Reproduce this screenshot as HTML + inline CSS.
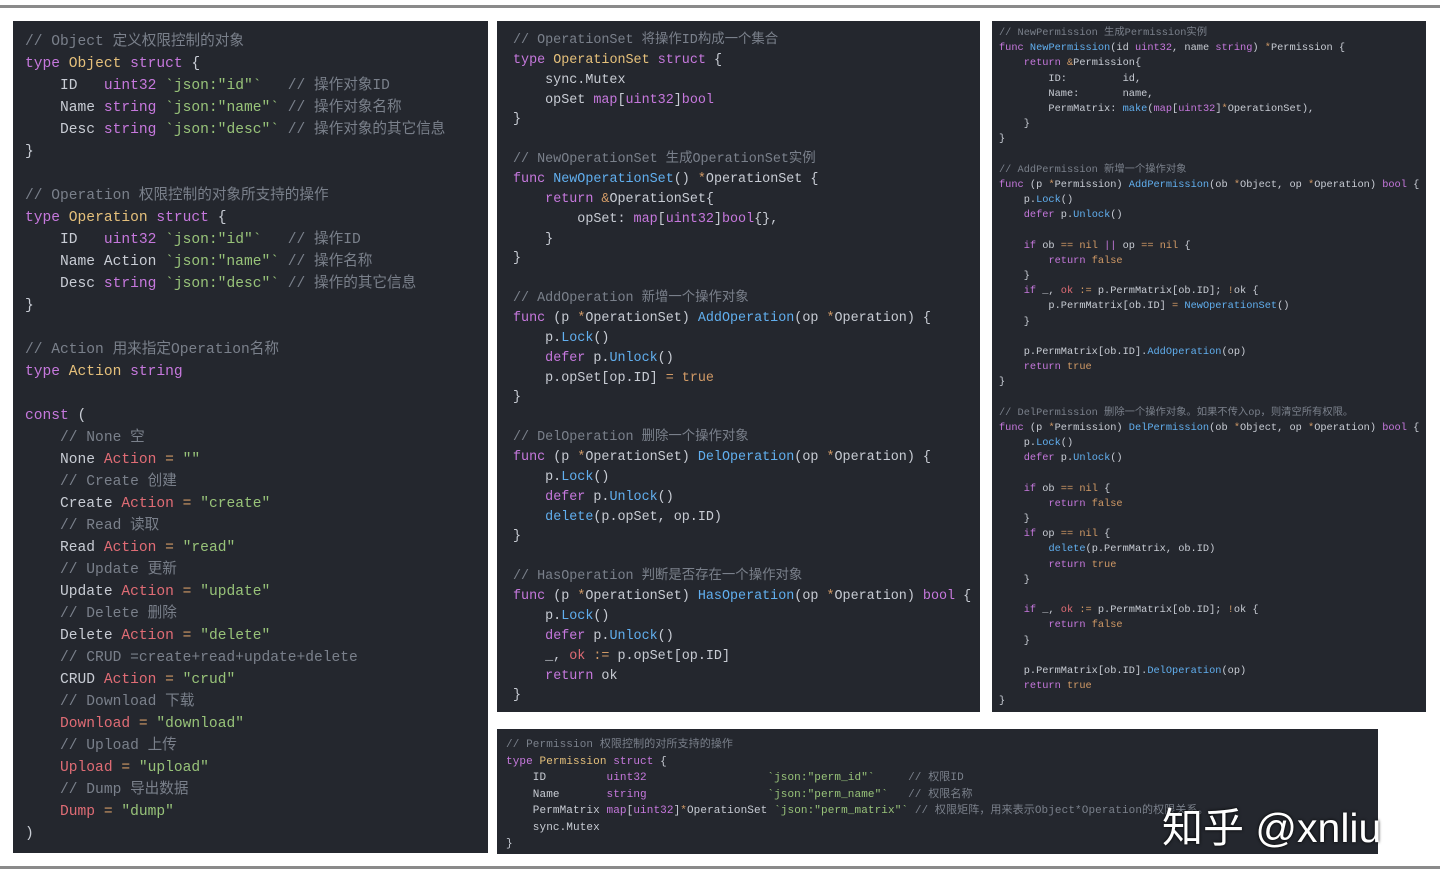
<!DOCTYPE html>
<html><head><meta charset="utf-8"><style>
html,body{margin:0;padding:0;background:#fff;width:1440px;height:879px;overflow:hidden;position:relative}
.hl{position:absolute;left:0;width:1440px;height:3px;background:#8a8a8a}
.p{position:absolute;background:#24272e;margin:0;color:#c8ccd4;font-family:"Liberation Mono","Noto Sans CJK SC",monospace;white-space:pre;overflow:hidden;box-sizing:border-box}
.c{color:#7a808b}.k{color:#c678dd}.t{color:#e5c07b}.s{color:#98c379}.f{color:#61afef}.r{color:#e06c75}.o{color:#d19a66}
.wm{position:absolute;left:1162px;top:794px;font-family:"Liberation Sans","Noto Sans CJK SC",sans-serif;font-size:41px;color:#fff;white-space:nowrap;text-shadow:0 0 3px #000}
</style></head><body>
<div class="hl" style="top:5px"></div>
<div class="hl" style="top:866px"></div>
<pre class="p" style="left:13px;top:21px;width:475px;height:832px;padding:10px 0 0 12px;font-size:14.6px;line-height:22px"><span class="c">// Object 定义权限控制的对象</span>
<span class="k">type</span> <span class="t">Object</span> <span class="k">struct</span> {
    ID   <span class="k">uint32</span> <span class="s">`json:"id"`</span>   <span class="c">// 操作对象ID</span>
    Name <span class="k">string</span> <span class="s">`json:"name"`</span> <span class="c">// 操作对象名称</span>
    Desc <span class="k">string</span> <span class="s">`json:"desc"`</span> <span class="c">// 操作对象的其它信息</span>
}

<span class="c">// Operation 权限控制的对象所支持的操作</span>
<span class="k">type</span> <span class="t">Operation</span> <span class="k">struct</span> {
    ID   <span class="k">uint32</span> <span class="s">`json:"id"`</span>   <span class="c">// 操作ID</span>
    Name Action <span class="s">`json:"name"`</span> <span class="c">// 操作名称</span>
    Desc <span class="k">string</span> <span class="s">`json:"desc"`</span> <span class="c">// 操作的其它信息</span>
}

<span class="c">// Action 用来指定Operation名称</span>
<span class="k">type</span> <span class="t">Action</span> <span class="k">string</span>

<span class="k">const</span> (
    <span class="c">// None 空</span>
    None <span class="r">Action</span> <span class="o">=</span> <span class="s">""</span>
    <span class="c">// Create 创建</span>
    Create <span class="r">Action</span> <span class="o">=</span> <span class="s">"create"</span>
    <span class="c">// Read 读取</span>
    Read <span class="r">Action</span> <span class="o">=</span> <span class="s">"read"</span>
    <span class="c">// Update 更新</span>
    Update <span class="r">Action</span> <span class="o">=</span> <span class="s">"update"</span>
    <span class="c">// Delete 删除</span>
    Delete <span class="r">Action</span> <span class="o">=</span> <span class="s">"delete"</span>
    <span class="c">// CRUD =create+read+update+delete</span>
    CRUD <span class="r">Action</span> <span class="o">=</span> <span class="s">"crud"</span>
    <span class="c">// Download 下载</span>
    <span class="r">Download</span> <span class="o">=</span> <span class="s">"download"</span>
    <span class="c">// Upload 上传</span>
    <span class="r">Upload</span> <span class="o">=</span> <span class="s">"upload"</span>
    <span class="c">// Dump 导出数据</span>
    <span class="r">Dump</span> <span class="o">=</span> <span class="s">"dump"</span>
)</pre>
<pre class="p" style="left:497px;top:21px;width:483px;height:691px;padding:10px 0 0 16px;font-size:13.4px;line-height:19.86px"><span class="c">// OperationSet 将操作ID构成一个集合</span>
<span class="k">type</span> <span class="t">OperationSet</span> <span class="k">struct</span> {
    sync.Mutex
    opSet <span class="k">map</span>[<span class="k">uint32</span>]<span class="k">bool</span>
}

<span class="c">// NewOperationSet 生成OperationSet实例</span>
<span class="k">func</span> <span class="f">NewOperationSet</span>() <span class="o">*</span>OperationSet {
    <span class="k">return</span> <span class="o">&amp;</span>OperationSet{
        opSet: <span class="k">map</span>[<span class="k">uint32</span>]<span class="k">bool</span>{},
    }
}

<span class="c">// AddOperation 新增一个操作对象</span>
<span class="k">func</span> (p <span class="o">*</span>OperationSet) <span class="f">AddOperation</span>(op <span class="o">*</span>Operation) {
    p.<span class="f">Lock</span>()
    <span class="k">defer</span> p.<span class="f">Unlock</span>()
    p.opSet[op.ID] <span class="o">=</span> <span class="o">true</span>
}

<span class="c">// DelOperation 删除一个操作对象</span>
<span class="k">func</span> (p <span class="o">*</span>OperationSet) <span class="f">DelOperation</span>(op <span class="o">*</span>Operation) {
    p.<span class="f">Lock</span>()
    <span class="k">defer</span> p.<span class="f">Unlock</span>()
    <span class="f">delete</span>(p.opSet, op.ID)
}

<span class="c">// HasOperation 判断是否存在一个操作对象</span>
<span class="k">func</span> (p <span class="o">*</span>OperationSet) <span class="f">HasOperation</span>(op <span class="o">*</span>Operation) <span class="k">bool</span> {
    p.<span class="f">Lock</span>()
    <span class="k">defer</span> p.<span class="f">Unlock</span>()
    _, <span class="r">ok</span> <span class="o">:=</span> p.opSet[op.ID]
    <span class="k">return</span> ok
}</pre>
<pre class="p" style="left:992px;top:21px;width:434px;height:691px;padding:5px 0 0 7px;font-size:10.3px;line-height:15.18px"><span class="c">// NewPermission 生成Permission实例</span>
<span class="k">func</span> <span class="f">NewPermission</span>(id <span class="k">uint32</span>, name <span class="k">string</span>) <span class="o">*</span>Permission {
    <span class="k">return</span> <span class="o">&amp;</span>Permission{
        ID:         id,
        Name:       name,
        PermMatrix: <span class="f">make</span>(<span class="k">map</span>[<span class="k">uint32</span>]<span class="o">*</span>OperationSet),
    }
}

<span class="c">// AddPermission 新增一个操作对象</span>
<span class="k">func</span> (p <span class="o">*</span>Permission) <span class="f">AddPermission</span>(ob <span class="o">*</span>Object, op <span class="o">*</span>Operation) <span class="k">bool</span> {
    p.<span class="f">Lock</span>()
    <span class="k">defer</span> p.<span class="f">Unlock</span>()

    <span class="k">if</span> ob <span class="o">==</span> <span class="o">nil</span> <span class="k">||</span> op <span class="o">==</span> <span class="o">nil</span> {
        <span class="k">return</span> <span class="o">false</span>
    }
    <span class="k">if</span> _, <span class="r">ok</span> <span class="o">:=</span> p.PermMatrix[ob.ID]; <span class="o">!</span>ok {
        p.PermMatrix[ob.ID] <span class="o">=</span> <span class="f">NewOperationSet</span>()
    }

    p.PermMatrix[ob.ID].<span class="f">AddOperation</span>(op)
    <span class="k">return</span> <span class="o">true</span>
}

<span class="c">// DelPermission 删除一个操作对象。如果不传入op，则清空所有权限。</span>
<span class="k">func</span> (p <span class="o">*</span>Permission) <span class="f">DelPermission</span>(ob <span class="o">*</span>Object, op <span class="o">*</span>Operation) <span class="k">bool</span> {
    p.<span class="f">Lock</span>()
    <span class="k">defer</span> p.<span class="f">Unlock</span>()

    <span class="k">if</span> ob <span class="o">==</span> <span class="o">nil</span> {
        <span class="k">return</span> <span class="o">false</span>
    }
    <span class="k">if</span> op <span class="o">==</span> <span class="o">nil</span> {
        <span class="f">delete</span>(p.PermMatrix, ob.ID)
        <span class="k">return</span> <span class="o">true</span>
    }

    <span class="k">if</span> _, <span class="r">ok</span> <span class="o">:=</span> p.PermMatrix[ob.ID]; <span class="o">!</span>ok {
        <span class="k">return</span> <span class="o">false</span>
    }

    p.PermMatrix[ob.ID].<span class="f">DelOperation</span>(op)
    <span class="k">return</span> <span class="o">true</span>
}</pre>
<pre class="p" style="left:497px;top:729px;width:881px;height:125px;padding:8px 0 0 9px;font-size:11px;line-height:16.5px;letter-spacing:0.1px"><span class="c">// Permission 权限控制的对所支持的操作</span>
<span class="k">type</span> <span class="t">Permission</span> <span class="k">struct</span> {
    ID         <span class="k">uint32</span>                  <span class="s">`json:"perm_id"`</span>     <span class="c">// 权限ID</span>
    Name       <span class="k">string</span>                  <span class="s">`json:"perm_name"`</span>   <span class="c">// 权限名称</span>
    PermMatrix <span class="k">map</span>[<span class="k">uint32</span>]<span class="o">*</span>OperationSet <span class="s">`json:"perm_matrix"`</span> <span class="c">// 权限矩阵，用来表示Object*Operation的权限关系。</span>
    sync.Mutex
}</pre>
<div class="wm">知乎 @xnliu</div>
</body></html>
